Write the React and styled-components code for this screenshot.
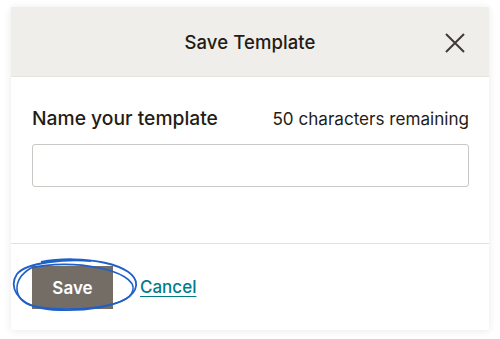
import React from 'react';
import styled, { createGlobalStyle } from 'styled-components';

const Global = createGlobalStyle`
  html, body { margin: 0; padding: 0; background: #ffffff; }
  body { font-family: Inter, "Noto Sans", "Liberation Sans", sans-serif; color: #241c15; }
`;

const Page = styled.div`
  width: 500px;
  height: 339px;
  padding: 7px 11px 9px;
  box-sizing: border-box;
`;

const Modal = styled.div`
  width: 478px;
  height: 323px;
  background: #fff;
  box-shadow: 0 1px 8px rgba(0,0,0,0.09);
  display: flex;
  flex-direction: column;
`;

const Header = styled.div`
  height: 70px;
  background: #efeeea;
  display: flex;
  align-items: center;
  justify-content: center;
  position: relative;
  border-bottom: 1px solid #e6e4df;
  box-sizing: border-box;
`;

const Title = styled.h2`
  margin: 0;
  font-size: 18.5px;
  font-weight: 500;
  letter-spacing: 0.1px;
`;

const Close = styled.button`
  position: absolute;
  right: 23px;
  top: 25px;
  width: 22px;
  height: 22px;
  border: 0;
  padding: 0;
  background: none;
  cursor: pointer;
  svg { display: block; }
`;

const Body = styled.div`
  padding: 29px 20px 0 21px;
  height: 167px;
  box-sizing: border-box;
  border-bottom: 1px solid #e2e2e0;
`;

const LabelRow = styled.div`
  display: flex;
  justify-content: space-between;
  align-items: baseline;
  margin-bottom: 14px;
`;

const Label = styled.label`
  font-size: 19.3px;
  font-weight: 500;
`;

const Counter = styled.span`
  font-size: 17.1px;
  font-weight: 400;
`;

const Input = styled.input`
  display: block;
  width: 100%;
  height: 43px;
  box-sizing: border-box;
  border: 1px solid #c9c8c5;
  border-radius: 3px;
  outline: none;
  font: inherit;
`;

const Footer = styled.div`
  display: flex;
  align-items: center;
  gap: 27px;
  padding: 22px 21px 0;
  position: relative;
`;

const SaveButton = styled.button`
  width: 81px;
  height: 43px;
  background: #736d66;
  color: #fff;
  border: 0;
  border-radius: 0;
  font-family: inherit;
  font-size: 17px;
  font-weight: 600;
  cursor: pointer;
`;

const CancelLink = styled.a`
  color: #007c89;
  font-size: 17px;
  font-weight: 500;
  text-decoration: underline;
  text-underline-offset: 3px;
  margin-top: -1px;
`;

const Scribble = styled.svg`
  position: absolute;
  left: 0;
  top: 12px;
  pointer-events: none;
`;

export default function App() {
  return (
    <>
      <Global />
      <Page>
        <Modal>
          <Header>
            <Title>Save Template</Title>
            <Close aria-label="Close">
              <svg width="22" height="22" viewBox="0 0 22 22">
                <path d="M2 2 L20 20 M20 2 L2 20" stroke="#3d3a37" strokeWidth="2" />
              </svg>
            </Close>
          </Header>
          <Body>
            <LabelRow>
              <Label>Name your template</Label>
              <Counter>50 characters remaining</Counter>
            </LabelRow>
            <Input type="text" />
          </Body>
          <Footer>
            <SaveButton>Save</SaveButton>
            <CancelLink href="#">Cancel</CancelLink>
            <Scribble width="130" height="60" viewBox="0 0 130 60">
              <path d="M30 6 C 70 -2, 128 8, 125 30 C 122 52, 60 58, 30 52 C 5 47, -2 30, 6 18 C 16 6, 55 3, 80 5" fill="none" stroke="#1f5fc8" strokeWidth="1.8" />
              <path d="M20 12 C 60 2, 126 14, 122 34 C 118 54, 50 56, 22 50 C 2 45, 0 24, 20 12" fill="none" stroke="#1f5fc8" strokeWidth="1.6" />
            </Scribble>
          </Footer>
        </Modal>
      </Page>
    </>
  );
}
